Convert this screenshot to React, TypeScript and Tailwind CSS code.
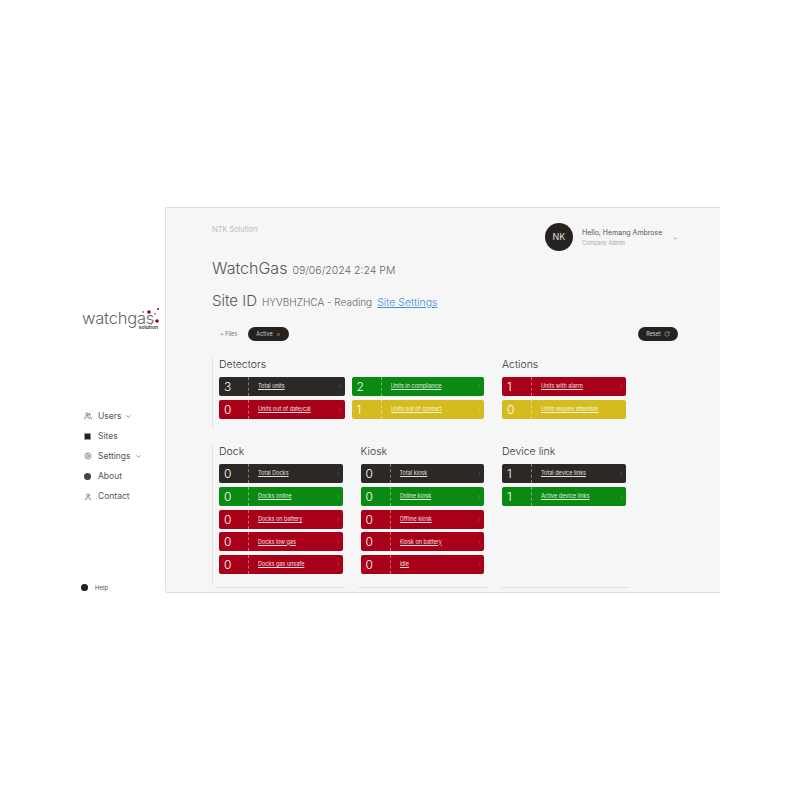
import { ChevronDown, ChevronRight, Info, RotateCw, Settings, User, Users, X } from "lucide-react";

type Tone = "dark" | "green" | "red" | "yellow";
type Stat = { value: number; label: string; tone: Tone };

const TONES: Record<Tone, string> = {
  dark: "bg-[#2b2826]",
  green: "bg-[#0a8a13]",
  red: "bg-[#a80018]",
  yellow: "bg-[#d4bc1f]",
};

const detectorsLeft: Stat[] = [
  { value: 3, label: "Total units", tone: "dark" },
  { value: 0, label: "Units out of date/cal", tone: "red" },
];
const detectorsRight: Stat[] = [
  { value: 2, label: "Units in compliance", tone: "green" },
  { value: 1, label: "Units out of contact", tone: "yellow" },
];
const actions: Stat[] = [
  { value: 1, label: "Units with alarm", tone: "red" },
  { value: 0, label: "Units require attention", tone: "yellow" },
];
const docks: Stat[] = [
  { value: 0, label: "Total Docks", tone: "dark" },
  { value: 0, label: "Docks online", tone: "green" },
  { value: 0, label: "Docks on battery", tone: "red" },
  { value: 0, label: "Docks low gas", tone: "red" },
  { value: 0, label: "Docks gas unsafe", tone: "red" },
];
const kiosks: Stat[] = [
  { value: 0, label: "Total kiosk", tone: "dark" },
  { value: 0, label: "Online kiosk", tone: "green" },
  { value: 0, label: "Offline kiosk", tone: "red" },
  { value: 0, label: "Kiosk on battery", tone: "red" },
  { value: 0, label: "Idle", tone: "red" },
];
const deviceLinks: Stat[] = [
  { value: 1, label: "Total device links", tone: "dark" },
  { value: 1, label: "Active device links", tone: "green" },
];

function StatCard({ stat }: { stat: Stat }) {
  return (
    <div className={`flex h-[19px] items-center rounded-[2px] text-white ${TONES[stat.tone]}`}>
      <span className="w-[30px] shrink-0 border-r border-dashed border-white/40 pl-[5px] text-[12px] leading-[19px] font-light">
        {stat.value}
      </span>
      <span className="ml-[9px] flex-1 truncate text-[5.5px] text-white/85 underline">{stat.label}</span>
      <ChevronRight className="mr-[2px] h-[5px] w-[5px] text-white/50" />
    </div>
  );
}

function StatGroup({ title, stats, className }: { title: string; stats: Stat[]; className: string }) {
  return (
    <section className={className}>
      <h2 className="mb-[6px] h-[13px] text-[10.5px] leading-[13px] font-light text-[#333]">{title}</h2>
      <div className="flex flex-col gap-[3.75px]">
        {stats.map((s) => (
          <StatCard key={s.label} stat={s} />
        ))}
      </div>
    </section>
  );
}

function NavItem({ icon, label, caret }: { icon: React.ReactNode; label: string; caret?: boolean }) {
  return (
    <div className="flex h-[20.2px] items-center pl-[84px] text-[8.5px] text-[#555]">
      <span className="flex w-[14px] shrink-0 items-center">{icon}</span>
      {label}
      {caret && <ChevronDown className="ml-[4px] h-[7px] w-[7px]" />}
    </div>
  );
}

function Sidebar() {
  return (
    <aside className="flex h-[386px] w-[165px] shrink-0 flex-col">
      <div className="mt-[101px] flex justify-end pr-[4px]">
        <div className="relative h-[22px] w-[79px]">
          <span className="absolute top-[3px] left-0 text-[16.5px] leading-[14px] font-light tracking-[-0.2px] text-[#666]">
            watchgas
          </span>
          <span className="absolute right-[3px] bottom-0 text-[5px] leading-[5px] font-semibold text-[#333]">
            solution
          </span>
          <svg viewBox="0 0 20 20" className="absolute top-[-3px] right-0 h-[20px] w-[20px]">
            <circle cx="8" cy="7" r="1.8" fill="#8a0c1c" />
            <circle cx="17" cy="4" r="1" fill="#8a0c1c" />
            <circle cx="2" cy="7" r="0.8" fill="#8a0c1c" />
            <circle cx="14" cy="9" r="0.8" fill="#8a0c1c" />
            <circle cx="16" cy="16" r="1.8" fill="#8a0c1c" />
          </svg>
        </div>
      </div>
      <nav className="mt-[76px]">
        <NavItem icon={<Users className="h-[8px] w-[8px]" />} label="Users" caret />
        <NavItem icon={<span className="h-[7px] w-[7px] border border-[#999] bg-[#222]" />} label="Sites" />
        <NavItem icon={<Settings className="h-[8px] w-[8px]" />} label="Settings" caret />
        <NavItem icon={<span className="h-[7px] w-[7px] rounded-full bg-[#444]" />} label="About" />
        <NavItem icon={<User className="h-[8px] w-[8px]" />} label="Contact" />
      </nav>
      <div className="mt-auto mb-[1px] flex items-center pl-[81px] text-[6px] text-[#555]">
        <Info className="mr-[7px] h-[7px] w-[7px] rounded-full bg-[#222] text-[#222]" />
        Help
      </div>
    </aside>
  );
}

export default function App() {
  return (
    <div className="flex h-[800px] w-[800px] bg-white pt-[207px] font-['Inter',sans-serif]">
      <Sidebar />
      <main className="h-[386px] w-[555px] shrink-0 overflow-hidden rounded-bl-[3px] border-t border-b border-l border-[#dedede] bg-[#f7f6f7] pl-[46px]">
        <header className="flex h-[48px] justify-between pt-[15px] pr-[42px]">
          <p className="pt-[2px] text-[7.5px] leading-[10px] font-light text-[#aaa]">NTK Solution</p>
          <div className="flex items-start">
            <div className="flex h-[28px] w-[28px] items-center justify-center rounded-full bg-[#26221f] text-[9px] text-[#ddd]">
              NK
            </div>
            <div className="ml-[9px] w-[91px] pt-[5px]">
              <p className="text-[7px] leading-[10px] text-[#555]">Hello, Hemang Ambrose</p>
              <p className="text-[5.5px] leading-[10px] text-[#aaa]">Company Admin</p>
            </div>
            <ChevronDown className="mt-[13px] h-[5px] w-[5px] text-[#333]" />
          </div>
        </header>

        <h1 className="mt-[2px] flex h-[20px] items-baseline gap-[5px] text-[16px] leading-[20px] font-light text-[#555]">
          WatchGas <span className="text-[10.5px] text-[#666]">09/06/2024 2:24 PM</span>
        </h1>
        <div className="mt-[13px] flex h-[20px] items-baseline gap-[5px] text-[15px] leading-[20px] font-light text-[#555]">
          Site ID
          <span className="text-[10px] text-[#666]">HYVBHZHCA - Reading</span>
          <a className="text-[10.5px] text-[#4a8fe0] underline">Site Settings</a>
        </div>

        <div className="mt-[16px] flex h-[14px] items-center justify-between pr-[42px] text-[5.5px]">
          <div className="flex items-center">
            <span className="ml-[8px] w-[28px] text-[#777]">~ Files</span>
            <span className="flex h-[14px] w-[41px] items-center justify-center gap-[3px] rounded-full bg-[#26221f] text-[#ccc]">
              Active <X className="h-[5px] w-[5px]" />
            </span>
          </div>
          <span className="flex h-[14px] w-[40px] items-center justify-center gap-[3px] rounded-full bg-[#26221f] text-[#ccc]">
            Reset <RotateCw className="h-[6px] w-[6px]" />
          </span>
        </div>

        <div className="mt-[17px] flex h-[71px] gap-[18px] border-l border-[#e4e4e4] pl-[6px]">
          <section className="w-[265px]">
            <h2 className="mb-[6px] h-[13px] text-[10.5px] leading-[13px] font-light text-[#333]">Detectors</h2>
            <div className="flex gap-[6.5px]">
              <div className="flex w-[126px] flex-col gap-[3.75px]">
                {detectorsLeft.map((s) => (
                  <StatCard key={s.label} stat={s} />
                ))}
              </div>
              <div className="flex flex-1 flex-col gap-[3.75px]">
                {detectorsRight.map((s) => (
                  <StatCard key={s.label} stat={s} />
                ))}
              </div>
            </div>
          </section>
          <StatGroup title="Actions" stats={actions} className="w-[124px]" />
        </div>

        <div className="mt-[16px] flex h-[140px] gap-[18px] border-l border-[#e4e4e4] pl-[6px]">
          <StatGroup title="Dock" stats={docks} className="w-[123.5px]" />
          <StatGroup title="Kiosk" stats={kiosks} className="w-[123.5px]" />
          <StatGroup title="Device link" stats={deviceLinks} className="w-[124px]" />
        </div>

        <div className="mt-[2px] ml-[4px] flex gap-[13px]">
          <div className="h-px w-[129px] bg-[#e4e4e4]" />
          <div className="h-px w-[130px] bg-[#e4e4e4]" />
          <div className="h-px w-[128px] bg-[#e4e4e4]" />
        </div>
      </main>
    </div>
  );
}
